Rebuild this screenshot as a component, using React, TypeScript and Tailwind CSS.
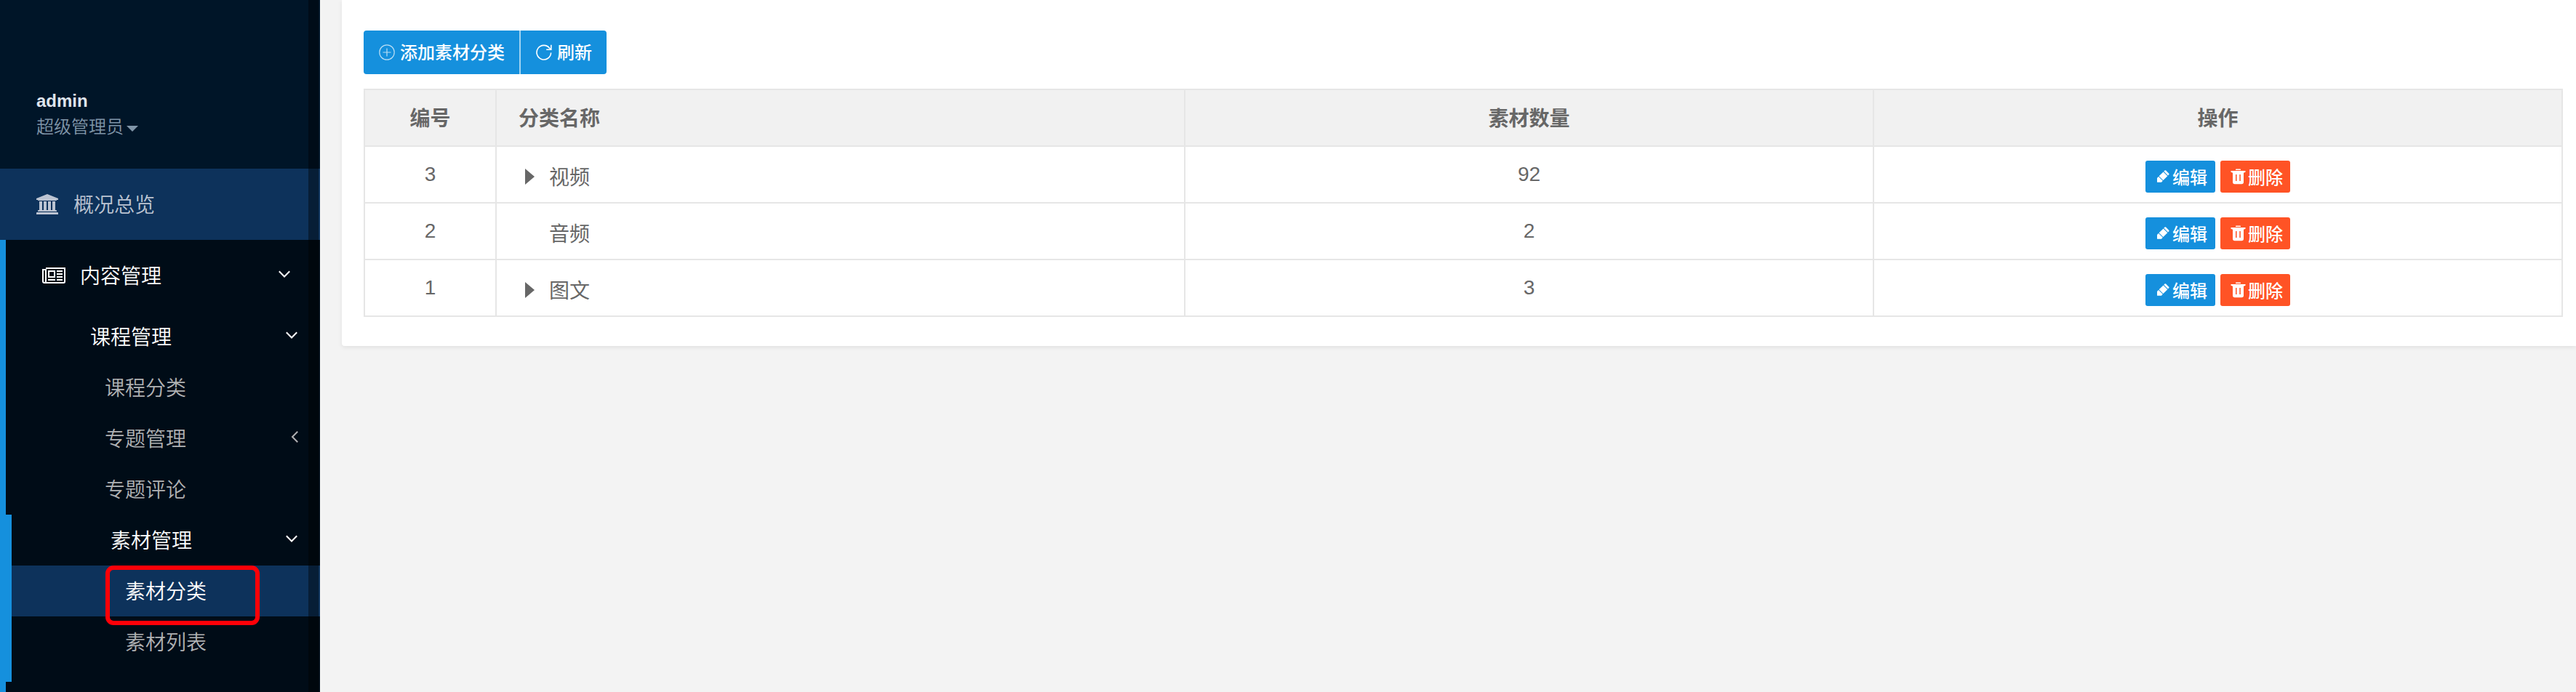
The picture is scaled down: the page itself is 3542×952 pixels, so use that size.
import { useState } from "react";

const BankIcon = () => (
    <svg className="w-[30px] h-7" viewBox="0 0 1920 1792" fill="currentColor">
        <path d="M960 0l960 384v128h-128q0 26-20.5 45t-48.5 19h-1526q-28 0-48.5-19t-20.5-45h-128v-128zM256 640h256v768h128v-768h256v768h128v-768h256v768h128v-768h256v768h59q28 0 48.5 19t20.5 45v64h-1664v-64q0-26 20.5-45t48.5-19h59v-768zM1851 1600q28 0 48.5 19t20.5 45v128h-1920v-128q0-26 20.5-45t48.5-19h1782z" />
    </svg>
);

// outer frame, folded left page, photo and text lines
const NewsIcon = () => (
    <svg className="w-8 h-[22px]" viewBox="0 0 32 22" fill="none" stroke="currentColor" strokeWidth="2">
        <path d="M5 1H31V19.5Q31 21 29.5 21H3Q1 21 1 19V3H5V19Q5 21 3 21" />
        <path d="M9 5H17V13H9ZM8 17H18M20 5H28M20 9H28M20 13H28M20 17H28" />
    </svg>
);

const AngleIcon = ({ open }: { open: boolean }) => (
    <svg className="mb-1 w-4 h-4" viewBox="0 0 16 16" fill="none" stroke="currentColor" strokeWidth="2">
        <path d={open ? "M0.8 4.3L8 11.5L15.2 4.3" : "M15.2 0.8L8 8L15.2 15.2"} />
    </svg>
);

const PlusIcon = () => (
    <svg className="w-[22px] h-[22px] opacity-70" viewBox="0 0 22 22" fill="none" stroke="currentColor" strokeWidth="1.2">
        <circle cx="11" cy="11" r="10.2" />
        <path d="M11 5.5v11M5.5 11h11" />
    </svg>
);

const RefreshIcon = () => (
    <svg className="w-[22px] h-[22px]" viewBox="0 0 22 22" fill="none" stroke="currentColor" strokeWidth="1.6">
        <path d="M20.6 11.5A9.8 9.8 0 1 1 18.6 5.2L20.6 7.2" />
        <path d="M20.8 0.8V7.2H14.2" />
    </svg>
);

const PencilIcon = () => (
    <svg className="w-[17px] h-[17px]" viewBox="0 0 17 17" fill="currentColor">
        <path d="M0.4 10.6L2 9L7.8 14.8L6.2 16.4Q5.9 16.8 5.3 16.8H0.4Q0 16.8 0 16.3V11.5Q0 11 0.4 10.6Z" />
        <path d="M2.6 8.3L8.6 2.5L14.3 8.2L8.4 14.1Z" />
        <path d="M9.3 1.8L10.5 0.6Q11.3 -0.1 12.1 0.6L16.2 4.7Q17 5.5 16.2 6.3L15 7.5Z" />
    </svg>
);

const TrashIcon = () => (
    <svg className="w-[21px] h-[22px]" viewBox="0 0 21 22" fill="currentColor">
        <path d="M7 2V1.2Q7 0.5 7.8 0.5H13.2Q14 0.5 14 1.2V2Z" />
        <path fillRule="evenodd" d="M0.5 3H20.5V4.8L18 5.8V18.5Q18 21.3 15.2 21.3H5.8Q3 21.3 3 18.5V5.8L0.5 4.8ZM7 8V17H8.5V8ZM12.3 8V17H13.8V8Z" />
    </svg>
);

const rows = [
    { id: 3, name: "视频", count: 92, children: true },
    { id: 2, name: "音频", count: 2, children: false },
    { id: 1, name: "图文", count: 3, children: true },
];

const courseItems = [
    { name: "课程分类", arrow: false },
    { name: "专题管理", arrow: true },
    { name: "专题评论", arrow: false },
];

function Sidebar() {
    const [current, setCurrent] = useState("素材分类");

    return (
        <nav className="relative w-[440px] h-full shrink-0 bg-[#001528] text-[28px] leading-10 font-[350] text-[#b0b1b3]">
            <div className="h-[232px] pt-[122px] pl-[50px] text-2xl">
                <div className="h-[34px] leading-[34px] font-bold text-[#dfe4ed]">admin</div>
                <div className="h-9 flex items-center gap-1 leading-9 text-[#8095a8]">
                    <span className="pt-0.5">超级管理员</span>
                    <span className="mt-1.5 border-x-8 border-t-8 border-x-transparent border-t-current" />
                </div>
            </div>
            <a className="h-[98px] pl-[50px] flex items-center bg-[#0d325b] text-[#bcc4d2]">
                <BankIcon />
                <span className="ml-[21px] pt-[3px]">概况总览</span>
            </a>
            <div className="h-[622px] bg-[#000c17] border-l-8 border-[#1590dd]">
                <a className="h-[98px] pl-[50px] pr-[41px] flex items-center text-white">
                    <NewsIcon />
                    <span className="ml-5 pt-[3px] flex-1">内容管理</span>
                    <AngleIcon open />
                </a>
                <a className="h-[70px] pl-[116px] pr-[31px] flex items-center text-white">
                    <span className="pt-[3px] flex-1">课程管理</span>
                    <AngleIcon open />
                </a>
                {courseItems.map((item) => (
                    <a key={item.name} className="h-[70px] pl-[136px] pr-[30px] flex items-center">
                        <span className="pt-[3px] flex-1">{item.name}</span>
                        {item.arrow && <AngleIcon open={false} />}
                    </a>
                ))}
                <div className="h-[230px] border-l-8 border-[#1590dd]">
                    <a className="h-[70px] pl-[136px] pr-[31px] flex items-center text-white">
                        <span className="pt-[3px] flex-1">素材管理</span>
                        <AngleIcon open />
                    </a>
                    {["素材分类", "素材列表"].map((name) => (
                        <a
                            key={name}
                            onClick={() => setCurrent(name)}
                            className={`h-[70px] pt-[3px] pl-[156px] flex items-center ${current === name ? "bg-[#0d325b] text-white" : ""}`}
                        >
                            {name}
                        </a>
                    ))}
                </div>
            </div>
            {/* scrollbar thumb */}
            <div className="absolute top-0 right-0.5 w-3.5 h-full bg-black/40" />
            <div className="absolute left-[145px] top-[778px] w-[212px] h-[82px] rounded-[11px] border-6 border-[#ff0008]" />
        </nav>
    );
}

export default function App() {
    return (
        <div className="flex w-[3542px] h-[952px] overflow-hidden bg-[#f3f3f3] font-['Liberation_Sans','Noto_Sans_CJK_SC',sans-serif] text-[#676767]">
            <Sidebar />
            <main className="flex-1 pl-[30px]">
                <section className="h-[476px] pt-[42px] pl-[30px] pr-[18px] bg-white rounded-bl shadow-[0_2px_6px_rgba(0,0,0,0.08)]">
                    <div className="flex w-[334px] h-[60px] rounded overflow-hidden bg-[#1590dd] text-white text-2xl font-medium">
                        <button className="w-[214px] pl-[21px] flex items-center gap-[7px]">
                            <PlusIcon />
                            <span className="pt-0.5">添加素材分类</span>
                        </button>
                        <button className="w-[120px] pl-[21px] border-l-2 border-[#a1d3f1] flex items-center gap-[7px]">
                            <RefreshIcon />
                            <span className="pt-0.5">刷新</span>
                        </button>
                    </div>
                    <table className="mt-5 w-[3024px] table-fixed border-separate border-spacing-0 border-t-2 border-l-2 border-[#e6e6e6] text-[28px] leading-10">
                        <colgroup>
                            <col className="w-[181px]" />
                            <col className="w-[947px]" />
                            <col className="w-[947px]" />
                            <col className="w-[947px]" />
                        </colgroup>
                        <thead>
                            <tr className="h-[78px] bg-[#f1f1f1]">
                                <th className="p-0 pt-[3px] border-r-2 border-b-2 border-[#e6e6e6]">编号</th>
                                <th className="p-0 pt-[3px] pl-[30px] text-left border-r-2 border-b-2 border-[#e6e6e6]">分类名称</th>
                                <th className="p-0 pt-[3px] border-r-2 border-b-2 border-[#e6e6e6]">素材数量</th>
                                <th className="p-0 pt-[3px] border-r-2 border-b-2 border-[#e6e6e6]">操作</th>
                            </tr>
                        </thead>
                        <tbody>
                            {rows.map((row) => (
                                <tr key={row.id} className="h-[78px] text-center">
                                    <td className="p-0 border-r-2 border-b-2 border-[#e6e6e6]">{row.id}</td>
                                    <td className="p-0 border-r-2 border-b-2 border-[#e6e6e6]">
                                        <div className="pt-[5px] pl-[39px] flex items-center">
                                            <span className="w-[33px]">
                                                {row.children && (
                                                    <svg className="w-[13px] h-[22px]" viewBox="0 0 13 22" fill="currentColor">
                                                        <path d="M0 0L13 11L0 22Z" />
                                                    </svg>
                                                )}
                                            </span>
                                            <span className="pt-1">{row.name}</span>
                                        </div>
                                    </td>
                                    <td className="p-0 border-r-2 border-b-2 border-[#e6e6e6]">{row.count}</td>
                                    <td className="p-0 border-r-2 border-b-2 border-[#e6e6e6]">
                                        <div className="pt-[5px] flex justify-center gap-[7px] text-white text-2xl font-medium">
                                            <button className="w-24 h-11 pl-4 rounded-[3px] flex items-center gap-1 bg-[#1590dd]">
                                                <PencilIcon />
                                                <span className="pt-1">编辑</span>
                                            </button>
                                            <button className="w-24 h-11 pl-3.5 rounded-[3px] flex items-center gap-[3px] bg-[#ff5325]">
                                                <TrashIcon />
                                                <span className="pt-1">删除</span>
                                            </button>
                                        </div>
                                    </td>
                                </tr>
                            ))}
                        </tbody>
                    </table>
                </section>
            </main>
        </div>
    );
}
